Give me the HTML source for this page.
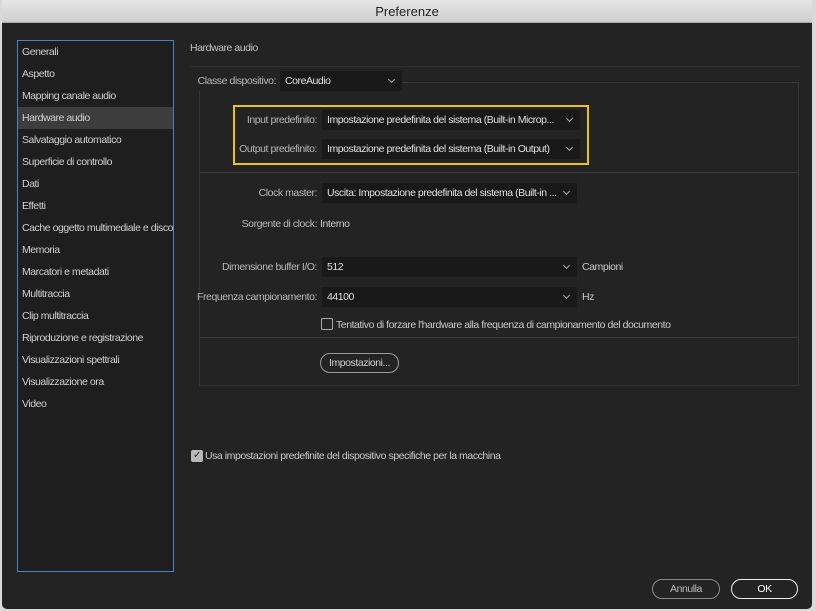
<!DOCTYPE html>
<html><head><meta charset="utf-8"><style>
*{box-sizing:border-box;margin:0;padding:0}
body{width:816px;height:611px;background:#d9d9d9;font-family:"Liberation Sans",sans-serif;font-size:10.5px;letter-spacing:-0.45px;color:#c9c9c9;position:relative;overflow:hidden}
.win{position:absolute;left:2px;top:0;width:810px;height:609px;background:#232323;border-radius:0 0 5px 5px;overflow:hidden}
.tb{position:absolute;left:0;top:0;width:810px;height:23px;background:linear-gradient(#e6e6e6,#cfcfcf);border-bottom:1px solid #aaa;color:#222;font-size:13px;letter-spacing:0;text-align:center;line-height:23px}
.a{position:absolute;white-space:nowrap}
.list{position:absolute;left:15px;top:40px;width:157px;height:532px;background:#1e1e1e;border:1px solid #4a80c4}
.list div{height:22px;line-height:22px;padding-left:4px;color:#d0d0d0;white-space:nowrap;overflow:hidden}
.list .sel{background:#3d3d3d}
.dd{position:absolute;background:#191919;height:20px;line-height:20px;padding-left:5px;color:#e0e0e0;white-space:nowrap;overflow:hidden}
.dd:after{content:"";position:absolute;right:8px;top:6px;width:4px;height:4px;border-right:1px solid #aaa;border-bottom:1px solid #aaa;transform:rotate(45deg)}
.lab{position:absolute;text-align:right;white-space:nowrap;color:#b8b8b8;line-height:20px}
.line{position:absolute;height:1px;background:#383838}
.btn{position:absolute;height:20px;border:1px solid #9a9a9a;border-radius:10px;text-align:center;line-height:18px;color:#d0d0d0;white-space:nowrap}
.cb{position:absolute;width:12px;height:12px;border:1px solid #aaa;border-radius:2px}
</style></head><body>
<div class="win">
<div class="tb">Preferenze</div>
<div class="list">
<div>Generali</div><div>Aspetto</div><div>Mapping canale audio</div><div class="sel">Hardware audio</div><div>Salvataggio automatico</div><div>Superficie di controllo</div><div>Dati</div><div>Effetti</div><div>Cache oggetto multimediale e disco</div><div>Memoria</div><div>Marcatori e metadati</div><div>Multitraccia</div><div>Clip multitraccia</div><div>Riproduzione e registrazione</div><div>Visualizzazioni spettrali</div><div>Visualizzazione ora</div><div>Video</div>
</div>
<div class="a" style="left:188px;top:42px;color:#c0c0c0">Hardware audio</div>
<div class="line" style="left:188px;top:66px;width:610px;background:#2e2e2e"></div>
<div style="position:absolute;left:197px;top:82px;width:600px;height:304px;border:1px solid #353535"></div>
<div class="lab" style="left:192px;top:71px;width:84px;background:#232323;padding-right:2px">Classe dispositivo:</div>
<div class="dd" style="left:278px;top:71px;width:122px">CoreAudio</div>
<div style="position:absolute;left:231px;top:105px;width:356px;height:60px;border:2px solid #e9c31b"></div>
<div class="lab" style="left:200px;top:110px;width:115px">Input predefinito:</div>
<div class="dd" style="left:320px;top:110px;width:258px">Impostazione predefinita del sistema (Built-in Microp...</div>
<div class="lab" style="left:200px;top:139px;width:115px">Output predefinito:</div>
<div class="dd" style="left:320px;top:139px;width:258px">Impostazione predefinita del sistema (Built-in Output)</div>
<div class="line" style="left:198px;top:172px;width:598px"></div>
<div class="lab" style="left:200px;top:183px;width:115px">Clock master:</div>
<div class="dd" style="left:320px;top:183px;width:255px">Uscita: Impostazione predefinita del sistema (Built-in ...</div>
<div class="lab" style="left:200px;top:214px;width:115px">Sorgente di clock:</div>
<div class="a" style="left:318px;top:214px;line-height:20px">Interno</div>
<div class="lab" style="left:190px;top:257px;width:125px">Dimensione buffer I/O:</div>
<div class="dd" style="left:320px;top:257px;width:255px">512</div>
<div class="a" style="left:580px;top:257px;line-height:20px">Campioni</div>
<div class="lab" style="left:190px;top:287px;width:125px">Frequenza campionamento:</div>
<div class="dd" style="left:320px;top:287px;width:255px">44100</div>
<div class="a" style="left:580px;top:287px;line-height:20px">Hz</div>
<div class="cb" style="left:319px;top:318px"></div>
<div class="a" style="left:334px;top:316px;line-height:18px">Tentativo di forzare l'hardware alla frequenza di campionamento del documento</div>
<div class="line" style="left:198px;top:337px;width:598px"></div>
<div class="btn" style="left:318px;top:353px;width:79px">Impostazioni...</div>
<div class="cb" style="left:189px;top:450px;background:#b8b8b8;border-color:#b8b8b8;color:#222;font-size:10px;line-height:10px;text-align:center">✓</div>
<div class="a" style="left:203px;top:448px;line-height:16px">Usa impostazioni predefinite del dispositivo specifiche per la macchina</div>
<div class="btn" style="left:650px;top:579px;width:68px;border-color:#8a8a8a;color:#bbb">Annulla</div>
<div class="btn" style="left:729px;top:579px;width:67px;border:1.5px solid #eee;color:#fff">OK</div>
</div>
</body></html>
